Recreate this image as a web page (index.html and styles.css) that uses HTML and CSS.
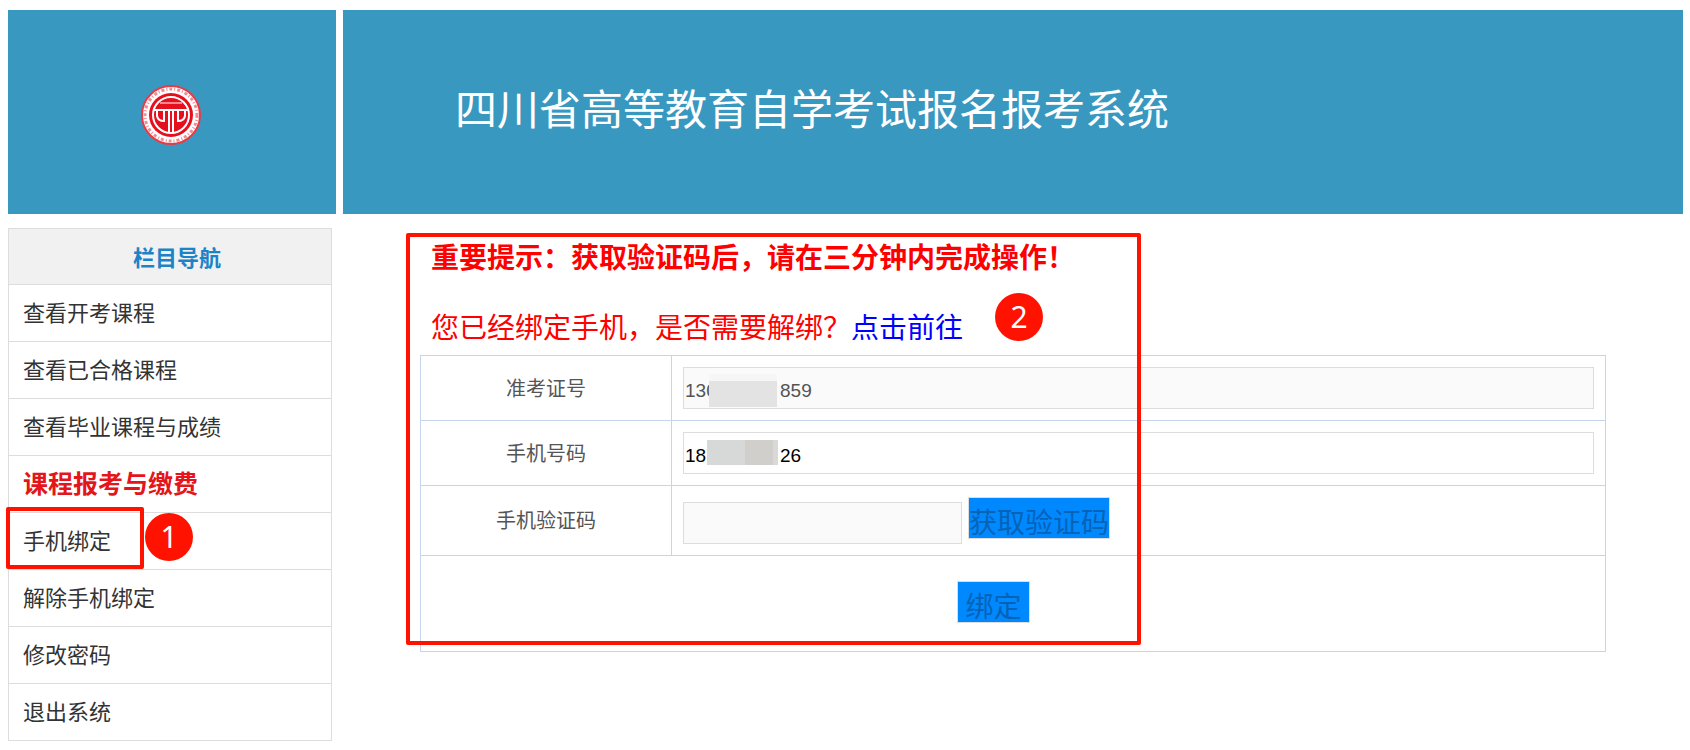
FILE: index.html
```
<!DOCTYPE html>
<html lang="zh-CN">
<head>
  <meta charset="UTF-8">
  <meta name="viewport" content="width=device-width, initial-scale=1.0">
  <title>四川省高等教育自学考试报名报考系统</title>
  <link rel="stylesheet" href="styles.css">
</head>
<body>
  <header class="header">
    <div class="logo">
      <svg width="62" height="62" viewBox="0 0 62 62" aria-hidden="true">
        <circle cx="31" cy="31" r="29" fill="#fff" stroke="#ea3a46" stroke-width="2"/>
        <circle cx="31" cy="31" r="26" fill="none" stroke="#f08d93" stroke-width="3" stroke-dasharray="3 2 1 2"/>
        <circle cx="31" cy="31" r="22" fill="#e60f1e"/>
        <circle cx="31" cy="31" r="18" fill="#e60f1e" stroke="#fff" stroke-width="2"/>
        <path d="M14 26H48" stroke="#fff" stroke-width="2"/>
        <path d="M20 19H42" stroke="#fff" stroke-width="1"/>
        <path d="M17 27V32Q18 37 24 37V27M45 27V32Q44 37 38 37V27" fill="none" stroke="#fff" stroke-width="2"/>
        <path d="M29 26V48M33 26V48" stroke="#fff" stroke-width="2"/>
      </svg>
    </div>
    <div class="banner">
      <h1>四川省高等教育自学考试报名报考系统</h1>
    </div>
  </header>

  <div class="main">
    <nav class="sidebar">
      <h2>栏目导航</h2>
      <ul>
        <li><a href="#">查看开考课程</a></li>
        <li><a href="#">查看已合格课程</a></li>
        <li><a href="#">查看毕业课程与成绩</a></li>
        <li><a href="#" class="hot">课程报考与缴费</a></li>
        <li class="marked">
          <a href="#">手机绑定</a>
          <span class="frame frame-nav"></span>
          <span class="step step-nav">1</span>
        </li>
        <li><a href="#">解除手机绑定</a></li>
        <li><a href="#">修改密码</a></li>
        <li><a href="#">退出系统</a></li>
      </ul>
    </nav>

    <main class="content">
      <p class="tip"><strong>重要提示：获取验证码后，请在三分钟内完成操作！</strong></p>
      <p class="tip">您已经绑定手机，是否需要解绑？<a href="#">点击前往</a></p>

      <form>
        <table class="bind-table">
          <tr>
            <th><label for="ticket">准考证号</label></th>
            <td>
              <div class="field">
                <input type="text" id="ticket" value="130            859" disabled>
                <span class="mask mask-ticket"></span>
              </div>
            </td>
          </tr>
          <tr>
            <th><label for="phone">手机号码</label></th>
            <td>
              <div class="field">
                <input type="text" id="phone" value="187            26">
                <span class="mask mask-phone"></span>
              </div>
            </td>
          </tr>
          <tr>
            <th><label for="code">手机验证码</label></th>
            <td>
              <div class="code">
                <input type="text" id="code" disabled>
                <button type="button" disabled>获取验证码</button>
              </div>
            </td>
          </tr>
          <tr>
            <td colspan="2" class="submit"><button type="submit" class="bind" disabled>绑定</button></td>
          </tr>
        </table>
      </form>

      <span class="frame frame-form"></span>
      <span class="step step-form">2</span>
    </main>
  </div>
</body>
</html>
```
FILE: styles.css
```
* {
  box-sizing: border-box;
}

body {
  margin: 0;
  padding: 10px 7px 9px 8px;
  background: #fff;
  color: #333;
  font-family: "Noto Sans CJK SC", sans-serif;
}

a {
  color: inherit;
  text-decoration: none;
}

/* header */
.header {
  display: flex;
  gap: 7px;
  height: 204px;
}

.logo,
.banner {
  display: flex;
  align-items: center;
  background: #3998bf;
}

.logo {
  flex: 0 0 328px;
  justify-content: center;
  padding: 6px 2px 0 0;
}

.banner {
  flex: 1;
  padding: 0 0 12px 112px;
}

.banner h1 {
  margin: 0;
  color: #fff;
  font-size: 42px;
  font-weight: 400;
  white-space: nowrap;
}

.main {
  display: flex;
  align-items: flex-start;
  margin-top: 14px;
}

/* left menu */
.sidebar {
  flex: 0 0 324px;
  border: 1px solid #ddd;
  border-bottom: none;
  font-size: 22px;
}

.sidebar h2 {
  margin: 0;
  padding-left: 14px;
  border-bottom: 1px solid #ddd;
  background: #f1f1f1;
  color: #1c84c6;
  font-size: 22px;
  line-height: 55px;
  text-align: center;
}

.sidebar ul {
  margin: 0;
  padding: 0;
  list-style: none;
}

.sidebar li {
  height: 57px;
  padding-left: 14px;
  border-bottom: 1px solid #ddd;
  line-height: 53px;
}

.sidebar .hot {
  color: #e4151b;
  font-size: 25px;
  font-weight: 700;
}

.marked {
  position: relative;
}

/* form */
.content {
  position: relative;
  flex: 1;
  padding: 8px 77px 0 88px;
}

.tip {
  margin: 0 0 30px;
  padding-left: 11px;
  color: #f00;
  font-size: 28px;
  line-height: 40px;
}

.tip + .tip {
  margin-bottom: 9px;
}

.tip a {
  color: #00f;
}

.bind-table {
  width: 100%;
  border-collapse: collapse;
}

.bind-table th,
.bind-table td {
  padding: 11px;
  border: 1px solid #c6d4ee;
}

.bind-table th {
  width: 251px;
  padding-bottom: 13px;
  color: #555;
  font-size: 20px;
  font-weight: 400;
}

.field {
  position: relative;
}

input {
  display: block;
  width: 100%;
  height: 42px;
  padding: 6px 1px 0;
  border: 1px solid #ddd;
  background: #fff;
  color: #000;
  font-family: "Liberation Sans", sans-serif;
  font-size: 19px;
}

input:disabled {
  background: #fafafa;
  color: #545454;
}

.mask {
  position: absolute;
  background: #e3e3e3;
}

.mask-ticket {
  top: 14px;
  left: 26px;
  width: 68px;
  height: 26px;
  box-shadow: 0 -7px #f6f6f6;
}

.mask-phone {
  top: 8px;
  left: 24px;
  width: 71px;
  height: 25px;
  background: linear-gradient(90deg, #d7d9d8 38px, #d1cfcc 38px, #d1cfcc 66px, #d9d9d9 66px);
}

.code {
  display: flex;
  align-items: flex-start;
  gap: 6px;
}

.code input {
  width: 279px;
  margin-top: 5px;
}

button {
  height: 42px;
  padding: 6px 0 0;
  border: 1px solid #ddd;
  background: #08f;
  color: #0563b5;
  font-family: inherit;
  font-size: 28px;
  line-height: 34px;
}

.bind-table .submit {
  height: 96px;
  padding: 11px 50px 15px 11px;
  text-align: center;
}

.bind {
  width: 73px;
}

/* red marks */
.frame {
  position: absolute;
  border: 4px solid #ff1200;
  border-radius: 2px;
  pointer-events: none;
}

.frame-nav {
  top: -6px;
  left: -3px;
  width: 138px;
  height: 62px;
}

.frame-form {
  top: 5px;
  left: 74px;
  width: 735px;
  height: 412px;
}

.step {
  position: absolute;
  width: 48px;
  height: 48px;
  border-radius: 50%;
  background: #ff1200;
  color: #fff;
  font-family: "Noto Sans", sans-serif;
  font-size: 30px;
  line-height: 48px;
  text-align: center;
}

.step-nav {
  top: 0;
  left: 136px;
}

.step-form {
  top: 65px;
  left: 663px;
}
```
